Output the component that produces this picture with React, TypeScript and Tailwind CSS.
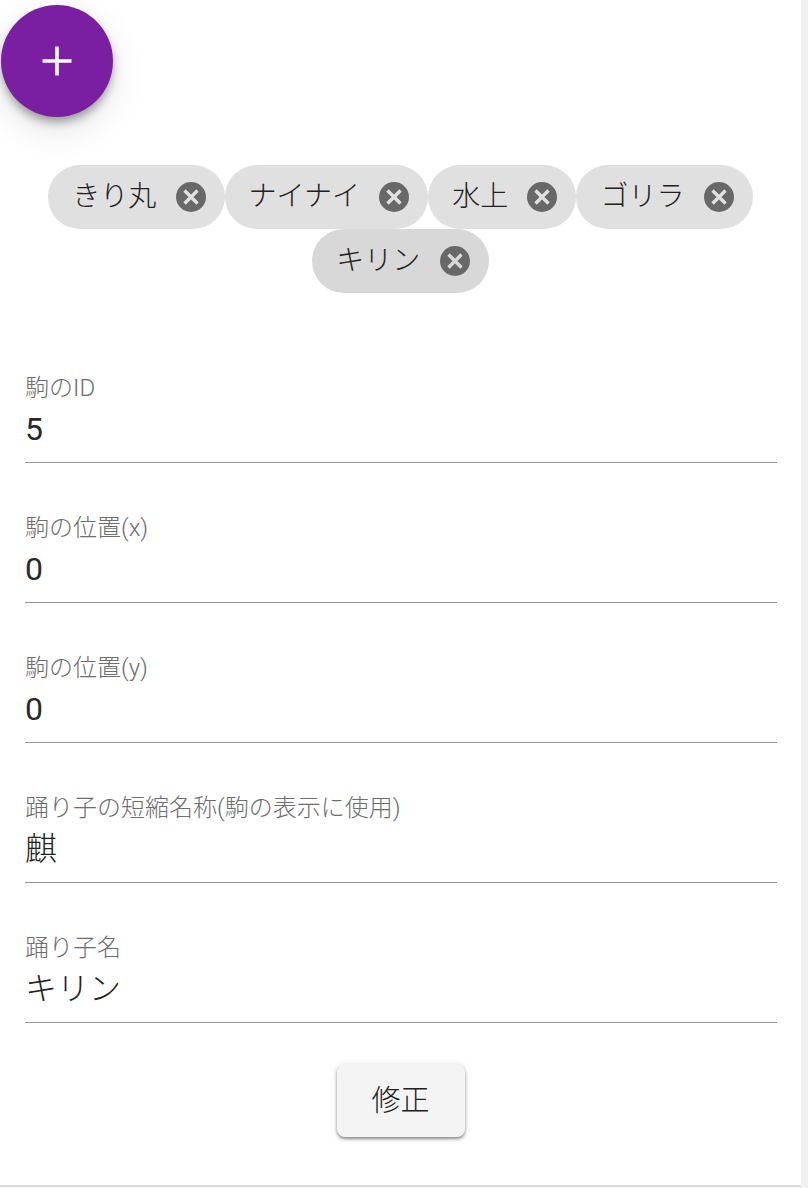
const FONT = "font-['Roboto','Noto_Sans_CJK_JP',sans-serif]";

const chipRows = ["きり丸", "ナイナイ", "水上", "ゴリラ"];

const fields = [
  { label: "駒のID", value: "5", plain: true },
  { label: "駒の位置(x)", value: "0", plain: true },
  { label: "駒の位置(y)", value: "0", plain: true },
  { label: "踊り子の短縮名称(駒の表示に使用)", value: "麒" },
  { label: "踊り子名", value: "キリン" },
];

const Chip = ({ label, focused }: { label: string; focused?: boolean }) => (
  <div
    className={`flex h-16 items-center rounded-full pl-6 pr-[19px] ${
      focused ? "bg-[#d8d8d8]" : "bg-[#e0e0e0]"
    }`}
  >
    <span className="text-[28px] leading-none font-light text-[#212121]">{label}</span>
    <svg className="ml-[19.25px] h-[30px] w-[30px] shrink-0" viewBox="0 0 30 30">
      <circle cx="15" cy="15" r="15" fill="#686868" />
      <path
        d="M8.5 8.5l13 13M21.5 8.5l-13 13"
        stroke={focused ? "#d8d8d8" : "#e0e0e0"}
        strokeWidth="3.4"
        fill="none"
      />
    </svg>
  </div>
);

type FieldProps = { label: string; value: string; plain?: boolean };

const Field = ({ label, value, plain }: FieldProps) => (
  <div className="mb-[46px] flex h-[94px] flex-col border-b border-[#949494]">
    <label className="mt-[1px] h-[36px] text-[24px] leading-[36px] font-light text-[#6e6e6e]">{label}</label>
    <div className={`mt-[1px] text-[32px] leading-[44px] ${plain ? "font-normal text-[#2a2a2a]" : "font-light text-[#212121]"}`}>
      {value}
    </div>
  </div>
);

export default function App() {
  return (
    <div className={`flex h-[1188px] w-[808px] overflow-hidden bg-white ${FONT}`}>
      <main className="flex h-[1187px] w-[801px] flex-col border-b-2 border-[#dcdcdc]">
        <button className="mt-[5px] ml-px flex h-28 w-28 shrink-0 items-center justify-center rounded-full bg-[#7b1fa2] shadow-[0_6px_10px_-1px_rgba(0,0,0,0.35),0_12px_34px_2px_rgba(0,0,0,0.10)]">
          <svg className="h-[30px] w-[30px]" viewBox="0 0 30 30">
            <path d="M15 0.5v29M0.5 15h29" stroke="#fff" strokeWidth="3.6" fill="none" />
          </svg>
        </button>

        <div className="mt-12 flex flex-wrap justify-center">
          {chipRows.map((c) => (
            <Chip key={c} label={c} />
          ))}
          <div className="flex w-full justify-center">
            <Chip label="キリン" focused />
          </div>
        </div>

        <form className="mt-[76px] pr-6 pl-[25px]">
          {fields.map((f) => (
            <Field key={f.label} {...f} />
          ))}
        </form>

        <div className="-mt-[5px] flex justify-center">
          <button
            type="button"
            className="flex h-[73px] w-32 items-center justify-center rounded-lg bg-[#f4f4f4] pt-[2px] text-[29px] font-light text-[#212121] shadow-[0_2px_3px_rgba(0,0,0,0.4),0_1px_8px_rgba(0,0,0,0.12)]"
          >
            修正
          </button>
        </div>
      </main>
      <div className="h-full w-[7px] bg-[#f0f0f0]" />
    </div>
  );
}
